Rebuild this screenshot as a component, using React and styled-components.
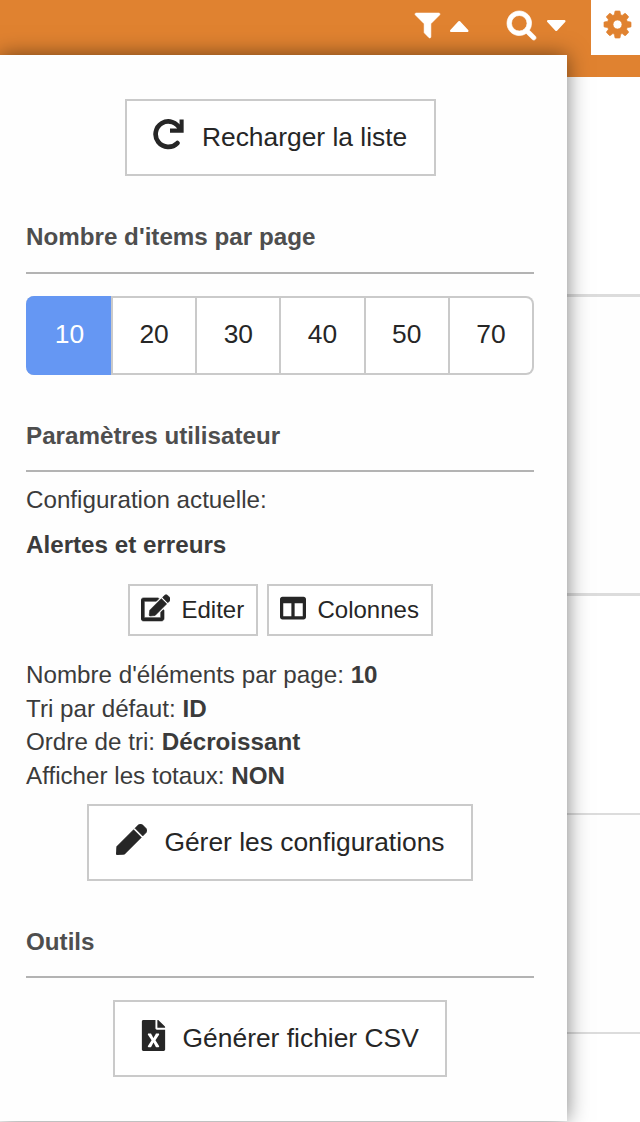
import React from "react";
import styled, { createGlobalStyle } from "styled-components";
import { FaEdit, FaColumns, FaPen, FaFileExcel } from "react-icons/fa";

const GlobalStyle = createGlobalStyle`
  *, *::before, *::after { box-sizing: border-box; }
  body {
    margin: 0;
    background: #fff;
    font-family: "Liberation Sans", Arial, Helvetica, sans-serif;
    color: #3b3b3b;
  }
`;

const Page = styled.div`
  position: relative;
  width: 640px;
  height: 1122px;
  overflow: hidden;
`;

const TopBar = styled.header`
  display: flex;
  justify-content: flex-end;
  align-items: flex-start;
  height: 77px;
  background: #e08230;
`;

const BarGroup = styled.div`
  display: flex;
  align-items: flex-start;
  gap: ${(p) => p.$gap}px;
  margin-right: ${(p) => p.$after}px;
  padding-top: ${(p) => p.$top}px;
  position: relative;
  z-index: 2;
  color: #fff;
`;

const Glyph = styled.svg`
  display: block;
  flex: none;
  width: ${(p) => p.$w}px;
  height: ${(p) => p.$h}px;
  margin-top: ${(p) => p.$drop || 0}px;
  overflow: visible;
  fill: currentColor;
  stroke: currentColor;
  stroke-width: ${(p) => p.$weight || 0}px;
`;

const SettingsTab = styled.div`
  position: relative;
  z-index: 2;
  width: 49px;
  height: 55px;
  padding: 11px 0 0 13px;
  background: #fff;
  color: #e08230;
`;

const Row = styled.div`
  height: ${(p) => p.$height}px;
  border-bottom: ${(p) => p.$line}px solid #dcdcdc;
  background: ${(p) => p.$bg || "#fff"};
`;

const Panel = styled.aside`
  position: absolute;
  top: 55px;
  left: 0;
  width: 567px;
  height: 1066px;
  padding: 44px 33px 0 26px;
  background: #fefefe;
  box-shadow: 0 0 20px rgba(0, 0, 0, 0.5);
`;

const ButtonLine = styled.div`
  display: flex;
  justify-content: center;
  gap: 9px;
  margin-top: ${(p) => p.$top || 0}px;
`;

const Button = styled.button`
  display: flex;
  align-items: center;
  width: ${(p) => p.$width}px;
  height: 77px;
  padding: 0 0 0 26.6px;
  border: 2px solid #cacaca;
  background: #fff;
  color: #262626;
  font: 26.4px "Liberation Sans", Arial, sans-serif;
  white-space: nowrap;

  svg {
    flex: none;
    margin: 0 ${(p) => p.$gap}px 6px ${(p) => p.$shift || 0}px;
  }
`;

const SmallButton = styled(Button)`
  height: 52px;
  padding: 0 0 1px 11px;
  font-size: 24px;

  svg {
    margin-bottom: ${(p) => p.$lift || 3}px;
  }
`;

const Heading = styled.h2`
  margin: ${(p) => p.$top}px 0 0;
  height: ${(p) => p.$height}px;
  border-bottom: 2px solid #b3b3b3;
  color: #4e4e4e;
  font-size: 24.2px;
  line-height: 28px;
`;

const Pager = styled.div`
  display: flex;
  height: 79px;
  margin-top: 22px;
  border: 2px solid #cacaca;
  border-left: 0;
  border-radius: 8px;
  background: #fff;
`;

const PageSize = styled.div`
  flex: 1;
  display: flex;
  align-items: center;
  justify-content: center;
  padding-bottom: 3px;
  border-left: 2px solid #cacaca;
  color: #262626;
  font-size: 26.4px;

  &:first-child {
    flex: 0 0 85px;
    margin: -2px 0;
    padding-left: 2px;
    border: 0;
    border-radius: 8px 0 0 8px;
    background: #6597f3;
    color: #fff;
  }
`;

const Text = styled.p`
  margin: ${(p) => p.$top}px 0 0;
  font-size: 24.2px;
  line-height: 28px;
  font-weight: ${(p) => (p.$bold ? 700 : 400)};
`;

const Details = styled.div`
  margin: 22px 0 12px;
  font-size: 24.2px;
  line-height: 33.6px;
`;

const ReloadIcon = () => (
  <svg width="31" height="31" viewBox="0 0 31 31" fill="none" stroke="currentColor">
    <path d="M27 10.2A12.7 12.7 0 1 0 24.4 24.1" strokeWidth="4.7" strokeLinecap="round" />
    <path d="M28.6 0.4V11.6H17" strokeWidth="4.1" />
    <path d="M20 4L28 12V6Z" fill="currentColor" stroke="none" />
  </svg>
);

const details = [
  ["Nombre d'éléments par page", "10"],
  ["Tri par défaut", "ID"],
  ["Ordre de tri", "Décroissant"],
  ["Afficher les totaux", "NON"],
];

export default function App() {
  return (
    <Page>
      <GlobalStyle />
      <TopBar>
        <BarGroup $gap={10} $after={39} $top={13}>
          <Glyph $w={25} $h={25} $weight={30} viewBox="191 256 1410 1410" preserveAspectRatio="none">
            <path d="M1595 295q17 41-14 70l-493 493v742q0 42-39 59-13 5-25 5-27 0-45-19l-256-256q-19-19-19-45v-486l-493-493q-31-29-14-70 17-39 59-39h1280q42 0 59 39z" />
          </Glyph>
          <Glyph $w={18.5} $h={11} $drop={8} viewBox="384 704 1024 576" preserveAspectRatio="none">
            <path d="M1408 1216q0 26-19 45t-45 19h-896q-26 0-45-19t-19-45 19-45l448-448q19-19 45-19t45 19l448 448q19 19 19 45z" />
          </Glyph>
        </BarGroup>
        <BarGroup $gap={10.5} $after={25.8} $top={11.3}>
          <Glyph $w={29} $h={29} $weight={40} viewBox="64 128 1664 1664">
            <path d="M1216 832q0-185-131.5-316.5t-316.5-131.5-316.5 131.5-131.5 316.5 131.5 316.5 316.5 131.5 316.5-131.5 131.5-316.5zm512 832q0 52-38 90t-90 38q-54 0-90-38l-343-342q-179 124-399 124-143 0-273.5-55.5t-225-150-150-225-55.5-273.5 55.5-273.5 150-225 225-150 273.5-55.5 273.5 55.5 225 150 150 225 55.5 273.5q0 220-124 399l343 343q37 37 37 90z" />
          </Glyph>
          <Glyph $w={18.5} $h={11} $drop={8.5} viewBox="384 704 1024 576" preserveAspectRatio="none">
            <path
              transform="matrix(1 0 0 -1 0 1984)"
              d="M1408 1216q0 26-19 45t-45 19h-896q-26 0-45-19t-19-45 19-45l448-448q19-19 45-19t45 19l448 448q19 19 19 45z"
            />
          </Glyph>
        </BarGroup>
        <SettingsTab>
          <Glyph $w={27} $h={27} $weight={40} viewBox="128 128 1536 1536">
            <path d="M1152 896q0-106-75-181t-181-75-181 75-75 181 75 181 181 75 181-75 75-181zm512-109v222q0 12-8 23t-20 13l-185 28q-19 54-39 91 35 50 107 138 10 12 10 25t-9 23q-27 37-99 108t-94 71q-12 0-26-9l-138-108q-44 23-91 38-16 136-29 186-7 28-36 28h-222q-14 0-24.5-8.5t-11.5-21.5l-28-184q-49-16-90-37l-141 107q-10 9-25 9-14 0-25-11-126-114-165-168-7-10-7-23 0-12 8-23 15-21 51-66.5t54-70.5q-27-50-41-99l-183-27q-13-2-21-12.5t-8-23.5v-222q0-12 8-23t19-13l186-28q14-46 39-92-40-57-107-138-10-12-10-24 0-10 9-23 26-36 98.5-107.5t94.5-71.5q13 0 26 10l138 107q44-23 91-38 16-136 29-186 7-28 36-28h222q14 0 24.5 8.5t11.5 21.5l28 184q49 16 90 37l142-107q9-9 24-9 13 0 25 10 129 119 165 170 7 8 7 22 0 12-8 23-15 21-51 66.5t-54 70.5q26 50 41 98l183 28q13 2 21 12.5t8 23.5z" />
          </Glyph>
        </SettingsTab>
      </TopBar>
      <Row $height={220} $line={3} />
      <Row $height={299} $line={3} $bg="#fefefe" />
      <Row $height={219} $line={2} />
      <Row $height={219} $line={2} $bg="#fefefe" />

      <Panel>
        <ButtonLine>
          <Button $width={311} $gap={17.8}>
            <ReloadIcon />
            Recharger la liste
          </Button>
        </ButtonLine>

        <Heading $top={47} $height={51}>Nombre d'items par page</Heading>
        <Pager>
          {[10, 20, 30, 40, 50, 70].map((n) => (
            <PageSize key={n}>{n}</PageSize>
          ))}
        </Pager>

        <Heading $top={47} $height={50}>Paramètres utilisateur</Heading>
        <Text $top={14}>Configuration actuelle:</Text>
        <Text $top={17} $bold>Alertes et erreurs</Text>
        <ButtonLine $top={25}>
          <SmallButton $width={130} $gap={11.4} $lift={3}>
            <FaEdit size={29.6} strokeWidth={12} />
            Editer
          </SmallButton>
          <SmallButton $width={166} $gap={12} $lift={4}>
            <FaColumns size={26} />
            Colonnes
          </SmallButton>
        </ButtonLine>
        <Details>
          {details.map(([label, value]) => (
            <div key={label}>
              {label}: <b>{value}</b>
            </div>
          ))}
        </Details>
        <ButtonLine>
          <Button $width={386} $gap={17.8}>
            <FaPen size={31} strokeWidth={10} />
            Gérer les configurations
          </Button>
        </ButtonLine>

        <Heading $top={47} $height={50}>Outils</Heading>
        <ButtonLine $top={22}>
          <Button $width={334} $gap={14} $shift={-4}>
            <FaFileExcel size={31} />
            Générer fichier CSV
          </Button>
        </ButtonLine>
      </Panel>
    </Page>
  );
}
